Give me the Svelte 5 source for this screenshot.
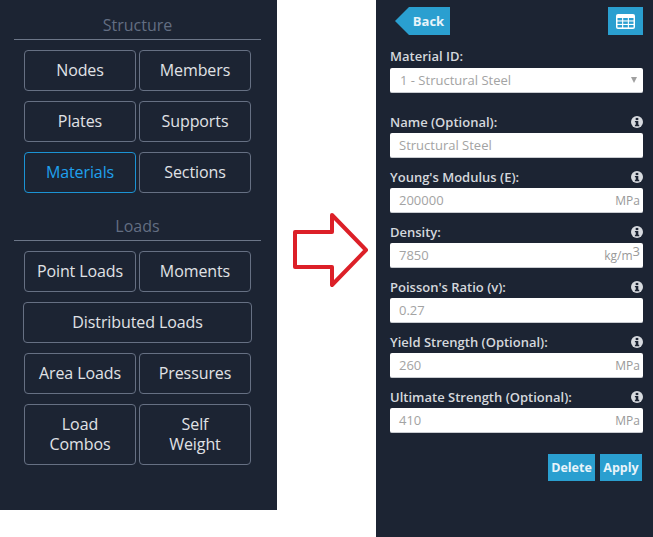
<script lang="ts">
  const fields = [
    { label: 'Name (Optional):', value: 'Structural Steel', unit: '' },
    { label: "Young's Modulus (E):", value: '200000', unit: 'MPa' },
    { label: 'Density:', value: '7850', unit: 'kg/m', sup: '3' },
    { label: "Poisson's Ratio (v):", value: '0.27', unit: '' },
    { label: 'Yield Strength (Optional):', value: '260', unit: 'MPa' },
    { label: 'Ultimate Strength (Optional):', value: '410', unit: 'MPa' }
  ];
</script>

<div class="page">
  <aside class="menu">
    <h2 class="heading">Structure</h2>
    <div class="rows">
      <div class="row">
        <button class="tile">Nodes</button>
        <button class="tile">Members</button>
      </div>
      <div class="row">
        <button class="tile">Plates</button>
        <button class="tile">Supports</button>
      </div>
      <div class="row">
        <button class="tile active">Materials</button>
        <button class="tile">Sections</button>
      </div>
    </div>

    <h2 class="heading loads">Loads</h2>
    <div class="rows">
      <div class="row">
        <button class="tile">Point Loads</button>
        <button class="tile">Moments</button>
      </div>
      <div class="row wide">
        <button class="tile">Distributed Loads</button>
      </div>
      <div class="row">
        <button class="tile">Area Loads</button>
        <button class="tile">Pressures</button>
      </div>
      <div class="row">
        <button class="tile tall">Load<br />Combos</button>
        <button class="tile tall">Self<br />Weight</button>
      </div>
    </div>
  </aside>

  <div class="gutter">
    <svg width="78" height="76" viewBox="0 0 78 76">
      <path
        d="M4 20 H41 V3 L75 38 L41 73 V55 H4 Z"
        fill="#fff"
        stroke="#dc2028"
        stroke-width="4"
        stroke-linejoin="round"
      />
    </svg>
  </div>

  <section class="editor">
    <div class="topbar">
      <button class="back">Back</button>
      <button class="grid-btn" aria-label="Table">
        <svg width="19" height="15" viewBox="0 0 19 15">
          <rect width="19" height="15" rx="2" fill="#fff" />
          <g fill="#2a9fd0">
            <rect x="1.5" y="4" width="4.6" height="2.4" />
            <rect x="7.2" y="4" width="4.6" height="2.4" />
            <rect x="12.9" y="4" width="4.6" height="2.4" />
            <rect x="1.5" y="7.5" width="4.6" height="2.4" />
            <rect x="7.2" y="7.5" width="4.6" height="2.4" />
            <rect x="12.9" y="7.5" width="4.6" height="2.4" />
            <rect x="1.5" y="11" width="4.6" height="2.4" />
            <rect x="7.2" y="11" width="4.6" height="2.4" />
            <rect x="12.9" y="11" width="4.6" height="2.4" />
          </g>
        </svg>
      </button>
    </div>

    <div class="label-row first"><span>Material ID:</span></div>
    <div class="select">
      <span>1 - Structural Steel</span>
      <i class="caret"></i>
    </div>

    <div class="fields">
      {#each fields as field}
        <div class="field">
          <div class="label-row">
            <span>{field.label}</span>
            <svg class="info" width="12" height="12" viewBox="0 0 12 12">
              <circle cx="6" cy="6" r="6" fill="#d8dbe0" />
              <rect x="4.7" y="1.9" width="2.6" height="2.2" fill="#1c2433" />
              <path d="M3.9 4.9h3.4v3.9h.9v1.4H3.9V8.8h.9V6.3h-.9z" fill="#1c2433" />
            </svg>
          </div>
          <div class="input">
            <span>{field.value}</span>
            {#if field.unit}
              <span class="unit">{field.unit}{#if field.sup}<sup>{field.sup}</sup>{/if}</span>
            {/if}
          </div>
        </div>
      {/each}
    </div>

    <div class="actions">
      <button class="action delete">Delete</button>
      <button class="action apply">Apply</button>
    </div>
  </section>
</div>

<style>
  :global(body) {
    margin: 0;
    background: #fff;
  }

  .page {
    display: flex;
    align-items: flex-start;
    width: 653px;
    height: 537px;
    overflow: hidden;
    font-family: 'Open Sans', 'Liberation Sans', sans-serif;
  }

  button {
    font-family: inherit;
    cursor: pointer;
  }

  /* left menu */
  .menu {
    width: 277px;
    height: 510px;
    flex: none;
    box-sizing: border-box;
    padding: 14px 16px 0 14px;
    background: #1c2433;
  }

  .heading {
    margin: 0;
    height: 25px;
    line-height: 23px;
    font-size: 16px;
    font-weight: 400;
    text-align: center;
    color: #636e82;
    border-bottom: 1px solid #6c7688;
  }

  .heading.loads {
    margin-top: 22px;
  }

  .rows {
    display: flex;
    flex-direction: column;
    gap: 10px;
    margin-top: 10px;
  }

  .row {
    display: flex;
    gap: 3px;
    padding: 0 10px;
  }

  .row.wide {
    padding: 0 9px;
  }

  .tile {
    flex: 1;
    height: 41px;
    padding: 0 0 2px;
    font-size: 16px;
    letter-spacing: -0.1px;
    line-height: 20px;
    color: #e0e2e6;
    background: transparent;
    border: 1px solid #667083;
    border-radius: 4px;
  }

  .tile.tall {
    height: 61px;
  }

  .tile.active {
    color: #1fa0ee;
    border-color: #1b93d4;
  }

  /* arrow */
  .gutter {
    width: 99px;
    height: 537px;
    flex: none;
    padding: 212px 0 0 14px;
    box-sizing: border-box;
  }

  .gutter svg {
    display: block;
  }

  /* material form */
  .editor {
    width: 277px;
    height: 537px;
    flex: none;
    box-sizing: border-box;
    padding: 7px 10px 0 14px;
    background: #1c2433;
  }

  .topbar {
    display: flex;
    justify-content: space-between;
    padding-left: 5px;
  }

  .back {
    width: 55px;
    height: 28px;
    padding: 0 0 0 12px;
    border: 0;
    font-size: 13px;
    font-weight: 700;
    color: #e8f4fa;
    background: #2a9fd0;
    clip-path: polygon(14px 0, 100% 0, 100% 100%, 14px 100%, 0 50%);
  }

  .grid-btn {
    width: 35px;
    height: 28px;
    padding: 0;
    border: 0;
    display: flex;
    align-items: center;
    justify-content: center;
    background: #2a9fd0;
  }

  .grid-btn svg {
    display: block;
  }

  .label-row {
    display: flex;
    align-items: center;
    justify-content: space-between;
    box-sizing: border-box;
    height: 21px;
    padding-bottom: 2px;
    font-size: 13px;
    font-weight: 600;
    color: #d5d8dd;
  }

  .label-row.first {
    margin-top: 11px;
    height: 22px;
  }

  .info {
    display: block;
  }

  .select {
    display: flex;
    align-items: center;
    justify-content: space-between;
    height: 25px;
    box-sizing: border-box;
    padding: 0 6px 0 10px;
    font-size: 13px;
    color: #a3a3a3;
    background: #fff;
    border-bottom: 1px solid #c9ccd1;
    border-radius: 2px;
  }

  .caret {
    width: 0;
    height: 0;
    border-left: 3px solid transparent;
    border-right: 3px solid transparent;
    border-top: 6px solid #a0a0a0;
  }

  .fields {
    display: flex;
    flex-direction: column;
    gap: 9px;
    margin-top: 19px;
  }

  .input {
    display: flex;
    align-items: center;
    justify-content: space-between;
    height: 25px;
    box-sizing: border-box;
    padding: 0 3px 0 9px;
    font-size: 13px;
    color: #a3a3a3;
    background: #fff;
    border-bottom: 1px solid #c9ccd1;
    border-radius: 2px;
  }

  .unit {
    font-size: 12px;
    color: #999;
  }

  .unit sup {
    font-size: 13px;
    line-height: 0;
    vertical-align: 4px;
  }

  .actions {
    display: flex;
    justify-content: flex-end;
    gap: 5px;
    margin-top: 21px;
    padding-right: 1px;
  }

  .action {
    height: 27px;
    padding: 0;
    border: 0;
    font-size: 12.5px;
    font-weight: 700;
    color: #e8f4fa;
    background: #2a9fd0;
  }

  .delete {
    width: 47px;
  }

  .apply {
    width: 42px;
  }
</style>
